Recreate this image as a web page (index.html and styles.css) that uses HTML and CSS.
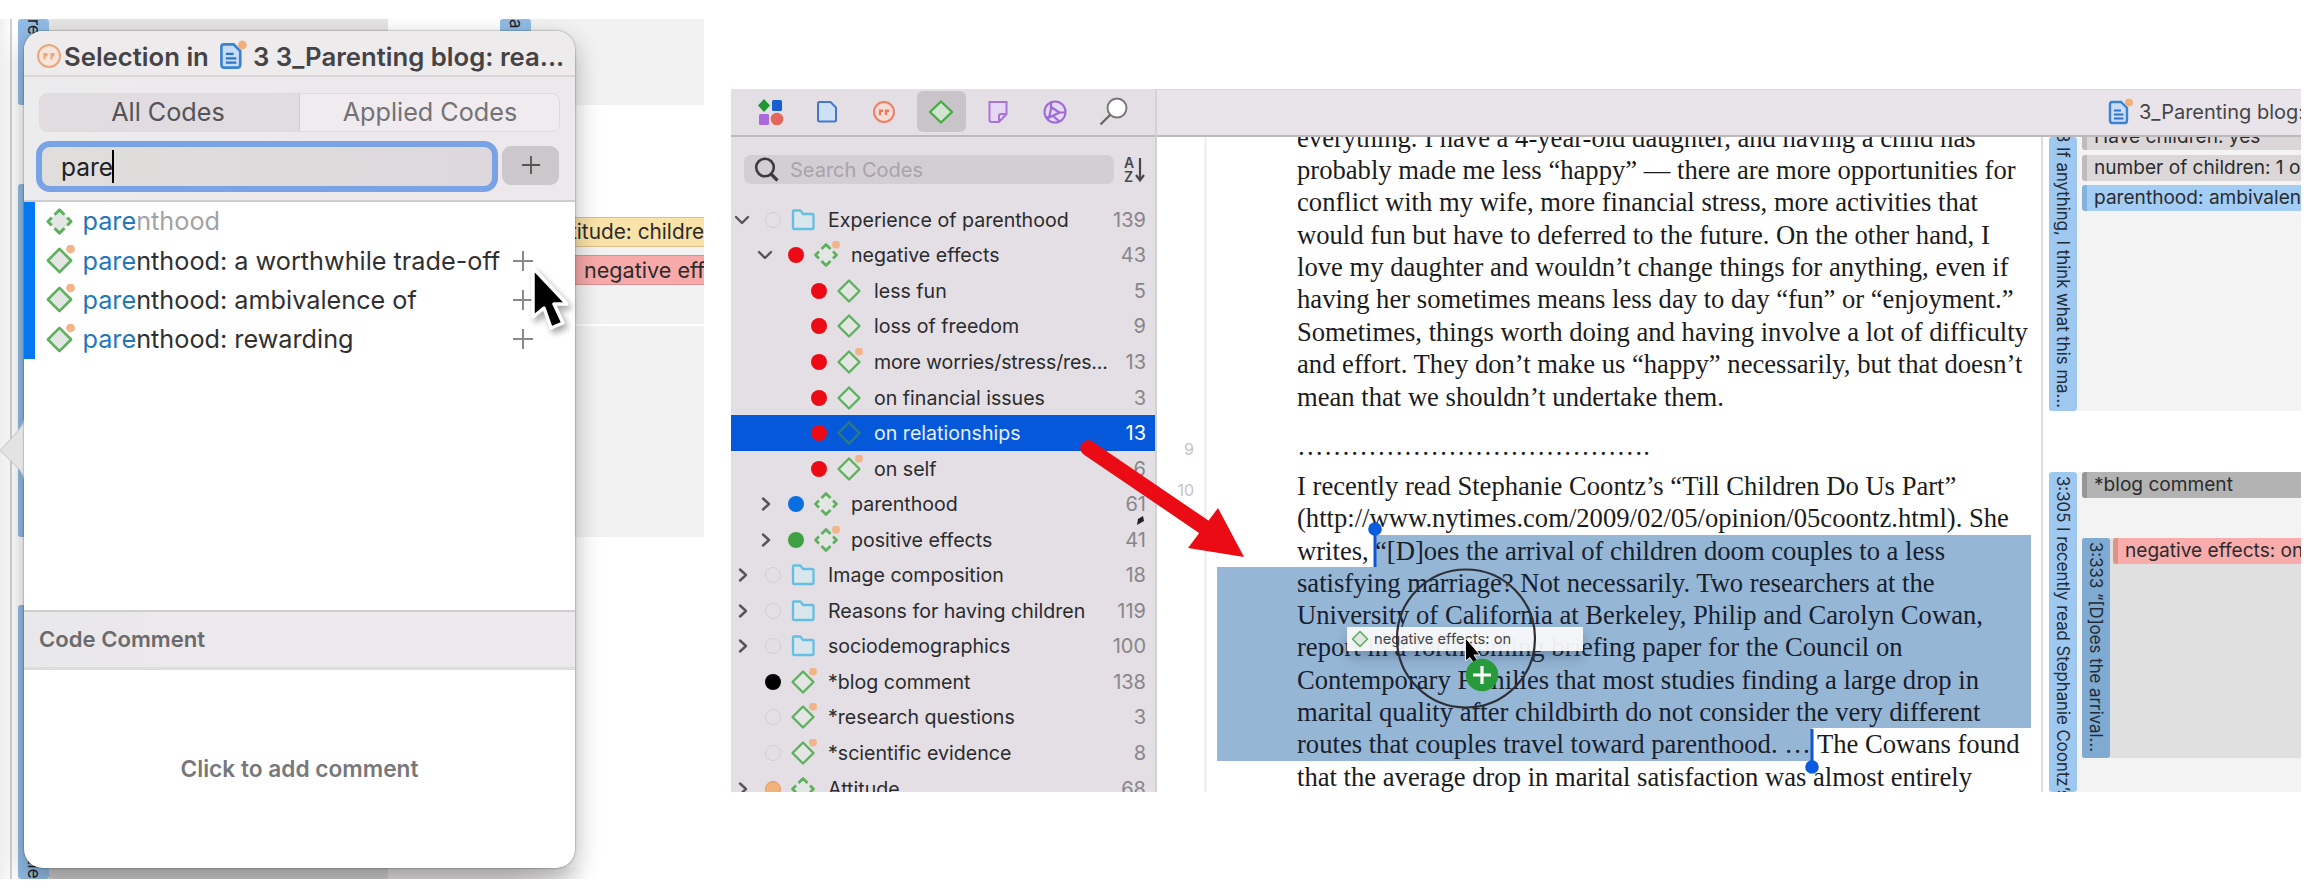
FILE: index.html
```html
<!DOCTYPE html>
<html lang="en">
<head>
<meta charset="utf-8">
<title>Codes</title>
<link rel="stylesheet" href="styles.css">
</head>
<body>
<svg class="defs" width="0" height="0" aria-hidden="true">
  <symbol id="code" viewBox="0 0 28 28"><path d="M14 3.5 24.5 14 14 24.5 3.5 14Z" fill="#e4e6e3" stroke="#5cb05e" stroke-width="2.3" stroke-linejoin="round"/></symbol>
  <symbol id="codeDot" viewBox="0 0 28 28"><path d="M14 3.5 24.5 14 14 24.5 3.5 14Z" fill="#e4e6e3" stroke="#5cb05e" stroke-width="2.3" stroke-linejoin="round"/><circle cx="24" cy="3.6" r="4" fill="#f2b589"/></symbol>
  <symbol id="cat" viewBox="0 0 28 28"><path d="M14 3.500 24.500 14 14 24.500 3.500 14Z" fill="#e4e6e3"/><path d="M9.500 8 14 3.500 18.500 8M21 10.500 24.500 14 21 17.500M18.500 20 14 24.500 9.500 20M7 17.500 3.500 14 7 10.500" fill="none" stroke="#5cb05e" stroke-width="2.600" stroke-linejoin="round"/></symbol>
  <symbol id="catDot" viewBox="0 0 28 28"><path d="M14 3.500 24.500 14 14 24.500 3.500 14Z" fill="#e4e6e3"/><path d="M9.500 8 14 3.500 18.500 8M21 10.500 24.500 14 21 17.500M18.500 20 14 24.500 9.500 20M7 17.500 3.500 14 7 10.500" fill="none" stroke="#5cb05e" stroke-width="2.600" stroke-linejoin="round"/><circle cx="24" cy="3.600" r="4" fill="#f2b589"/></symbol>
  <symbol id="folder" viewBox="0 0 28 28"><path d="M4 5.500Q4 4.500 5 4.500H10.500Q11.500 4.500 12 5.300L14 8H23Q24.500 8 24.500 9.500V21.500Q24.500 23 23 23H5.500Q4 23 4 21.500Z" fill="#d9e6ee" stroke="#64bfe3" stroke-width="2.300"/></symbol>
  <symbol id="down" viewBox="0 0 16 16"><path d="M2 5 8 11 14 5" fill="none" stroke="#555" stroke-width="2.400" stroke-linecap="round" stroke-linejoin="round"/></symbol>
  <symbol id="right" viewBox="0 0 16 16"><path d="M6 2.500 12 8 6 13.500" fill="none" stroke="#555" stroke-width="2.400" stroke-linecap="round" stroke-linejoin="round"/></symbol>
  <symbol id="doc" viewBox="0 0 26 28"><path d="M3 6Q3 4 5 4H14L20 10V22Q20 25 18 25H5Q3 25 3 22Z" fill="#c9dcf7" stroke="#3b82d0" stroke-width="2.400"/><path d="M7 12.500H14M7 16.500H16.500M7 20.500H16.500" stroke="#2f74c8" stroke-width="2"/><circle cx="22" cy="4.500" r="4" fill="#f2b07c"/></symbol>
  <symbol id="plus" viewBox="0 0 22 22"><path d="M11 1V21M1 11H21" stroke="currentColor" stroke-width="2" fill="none"/></symbol>
</svg>

<main class="page">
  <section class="shot quotes">
    <div class="canvas">
      <div class="block b-top"></div><div class="block b-topright"></div><div class="block b-mid"></div><div class="block b-low"></div><div class="block b-bottom"></div><div class="block b-bottom2"></div>
      <div class="rule"></div>
      <div class="bar bar1"><span>re</span></div><div class="bar bar2"></div><div class="bar bar3"><span>tie</span></div>
      <div class="bar bar4"><span>a</span></div>
      <div class="tag tag-yellow">titude: childre</div>
      <div class="tag tag-red">negative eff</div>
    </div>
    <svg class="notch" width="25" height="70" viewBox="0 0 25 70"><path d="M25 0Q24 8 18 15L0 34.500 18 52Q24 58 25 68Z" fill="#e3e2e4"/><path d="M25 0Q24 8 18 15L0 34.500 18 52Q24 58 25 68" fill="none" stroke="#c4c4c4"/></svg>
    <div class="popover">
      <header class="pop-title">
        <svg width="26" height="26" viewBox="0 0 26 26"><circle cx="13" cy="13" r="11" fill="#f7e4da" stroke="#eba67c" stroke-width="2"/><path d="M8.500 10V16.500M10.500 10V13.500M15.500 10V16.500M17.500 10V13.500" stroke="#eba67c" stroke-width="2"/></svg>
        <span class="t1">Selection in</span>
        <svg class="pop-doc" width="29" height="31"><use href="#doc"/></svg>
        <span class="t2">3 3_Parenting blog: rea...</span>
      </header>
      <div class="pop-tools">
        <div class="segments"><div class="seg on"><span>All Codes</span></div><div class="seg"><span>Applied Codes</span></div></div>
        <div class="entry"><div class="field"><span>pare</span><i class="caret"></i></div><div class="add"><svg width="20" height="20"><use href="#plus"/></svg></div></div>
      </div>
      <div class="hits">
        <div class="hit dim"><svg width="31" height="31"><use href="#cat"/></svg><span><b>pare</b>nthood</span></div>
        <div class="hit"><svg width="31" height="31"><use href="#codeDot"/></svg><span><b>pare</b>nthood: a worthwhile trade-off</span><svg class="hp" width="22" height="22"><use href="#plus"/></svg></div>
        <div class="hit"><svg width="31" height="31"><use href="#codeDot"/></svg><span><b>pare</b>nthood: ambivalence of</span><svg class="hp" width="22" height="22"><use href="#plus"/></svg></div>
        <div class="hit"><svg width="31" height="31"><use href="#codeDot"/></svg><span><b>pare</b>nthood: rewarding</span><svg class="hp" width="22" height="22"><use href="#plus"/></svg></div>
      </div>
      <div class="comment-head"><span>Code Comment</span></div>
      <div class="comment"><span>Click to add comment</span></div>
    </div>
    <svg class="pointer" width="50" height="74" viewBox="0 0 50 74"><path d="M4 2V51L15 42 22 62 34 57 25 38H38Z" fill="#000" stroke="#fff" stroke-width="3.500" stroke-linejoin="round"/></svg>
  </section>

  <section class="shot app">
    <aside class="side">
      <nav class="tabs">
        <div class="tab"><svg width="30" height="30" viewBox="0 0 30 30"><path d="M9 2 15 8.500 9 15 3 8.500Z" fill="#1d9a35"/><rect x="17" y="3" width="10" height="11" rx="1.500" fill="#1660cf"/><rect x="4" y="17" width="10" height="11" rx="1.500" fill="#ad68dd"/><circle cx="22" cy="22" r="6.300" fill="#e4685a"/></svg></div>
        <div class="tab"><svg width="30" height="30" viewBox="0 0 30 30"><path d="M7.500 5H18.500L24 10.500V23Q24 24.500 22.500 24.500H7.500Q6 24.500 6 23V6.500Q6 5 7.500 5Z" fill="#cfe0f5" stroke="#4578cc" stroke-width="2"/></svg></div>
        <div class="tab"><svg width="30" height="30" viewBox="0 0 30 30"><circle cx="15" cy="15" r="10" fill="#f5dcd6" stroke="#ee8165" stroke-width="2"/><path d="M11 12.500V18M13 12.500V15M17 12.500V18M19 12.500V15" stroke="#ee7a5c" stroke-width="2.200"/></svg></div>
        <div class="tab active"><svg width="30" height="30" viewBox="0 0 30 30"><path d="M15 4.500 26 15 15 25.500 4 15Z" fill="#d4e2d2" stroke="#43ad3f" stroke-width="2.300" stroke-linejoin="round"/></svg></div>
        <div class="tab"><svg width="30" height="30" viewBox="0 0 30 30"><path d="M6.500 5H23.500V17L16 25H8.500Q6.500 25 6.500 23ZM16 25V19Q16 17 18 17H23.500" fill="#e6d8f2" stroke="#a873db" stroke-width="2"/></svg></div>
        <div class="tab"><svg width="30" height="30" viewBox="0 0 30 30"><circle cx="15" cy="15" r="10.500" fill="#e6d8f2" stroke="#9b6bd8" stroke-width="2"/><path d="M11 5.500V12L9 20.500 19.500 15.500 11 10M19.500 15.500H25M9 20.500 6 20M13 19 19 24" fill="none" stroke="#9b6bd8" stroke-width="2.200"/></svg></div>
        <div class="tab"><svg width="30" height="30" viewBox="0 0 30 30"><circle cx="19" cy="11" r="9.500" fill="#fff" stroke="#777" stroke-width="1.900"/><path d="M12 18 2.500 27.500" stroke="#666" stroke-width="2.300"/></svg></div>
      </nav>
      <div class="search">
        <div class="search-box"><svg width="26" height="26" viewBox="0 0 26 26"><circle cx="11" cy="10.500" r="8.800" fill="none" stroke="#3c3c3e" stroke-width="2.600"/><path d="M17 17 23.500 23.500" stroke="#3c3c3e" stroke-width="3.200"/></svg><span>Search Codes</span></div>
        <div class="sort"><span class="az"><i>A</i><i>Z</i></span><svg width="10" height="26" viewBox="0 0 10 26"><path d="M5 1V22M1 18 5 23.500 9 18" stroke="#48484a" stroke-width="2.200" fill="none"/></svg></div>
      </div>
      <div class="tree">
        <div class="row l0"><svg class="ch"><use href="#down"/></svg><i class="dot"></i><svg class="ic"><use href="#folder"/></svg><span class="nm">Experience of parenthood</span><span class="ct">139</span></div>
        <div class="row l1"><svg class="ch"><use href="#down"/></svg><i class="dot red"></i><svg class="ic"><use href="#catDot"/></svg><span class="nm">negative effects</span><span class="ct">43</span></div>
        <div class="row l2"><svg class="ch"></svg><i class="dot red"></i><svg class="ic"><use href="#code"/></svg><span class="nm">less fun</span><span class="ct">5</span></div>
        <div class="row l2"><svg class="ch"></svg><i class="dot red"></i><svg class="ic"><use href="#code"/></svg><span class="nm">loss of freedom</span><span class="ct">9</span></div>
        <div class="row l2"><svg class="ch"></svg><i class="dot red"></i><svg class="ic"><use href="#codeDot"/></svg><span class="nm snug">more worries/stress/res...</span><span class="ct">13</span></div>
        <div class="row l2"><svg class="ch"></svg><i class="dot red"></i><svg class="ic"><use href="#code"/></svg><span class="nm">on financial issues</span><span class="ct">3</span></div>
        <div class="row l2 sel"><svg class="ch"></svg><i class="dot red"></i><svg class="ic" viewBox="0 0 28 28"><path d="M14 3.500 24.500 14 14 24.500 3.500 14Z" fill="none" stroke="#2b7a80" stroke-width="2.300"/></svg><span class="nm">on relationships</span><span class="ct">13</span></div>
        <div class="row l2"><svg class="ch"></svg><i class="dot red"></i><svg class="ic"><use href="#codeDot"/></svg><span class="nm">on self</span><span class="ct">6</span></div>
        <div class="row l1"><svg class="ch"><use href="#right"/></svg><i class="dot blue"></i><svg class="ic"><use href="#cat"/></svg><span class="nm">parenthood</span><span class="ct">61</span></div>
        <div class="row l1"><svg class="ch"><use href="#right"/></svg><i class="dot green"></i><svg class="ic"><use href="#catDot"/></svg><span class="nm">positive effects</span><span class="ct">41</span></div>
        <div class="row l0"><svg class="ch"><use href="#right"/></svg><i class="dot"></i><svg class="ic"><use href="#folder"/></svg><span class="nm">Image composition</span><span class="ct">18</span></div>
        <div class="row l0"><svg class="ch"><use href="#right"/></svg><i class="dot"></i><svg class="ic"><use href="#folder"/></svg><span class="nm">Reasons for having children</span><span class="ct">119</span></div>
        <div class="row l0"><svg class="ch"><use href="#right"/></svg><i class="dot"></i><svg class="ic"><use href="#folder"/></svg><span class="nm">sociodemographics</span><span class="ct">100</span></div>
        <div class="row l0"><svg class="ch"></svg><i class="dot black"></i><svg class="ic"><use href="#codeDot"/></svg><span class="nm">*blog comment</span><span class="ct">138</span></div>
        <div class="row l0"><svg class="ch"></svg><i class="dot"></i><svg class="ic"><use href="#codeDot"/></svg><span class="nm">*research questions</span><span class="ct">3</span></div>
        <div class="row l0"><svg class="ch"></svg><i class="dot"></i><svg class="ic"><use href="#codeDot"/></svg><span class="nm">*scientific evidence</span><span class="ct">8</span></div>
        <div class="row l0"><svg class="ch"><use href="#right"/></svg><i class="dot orange"></i><svg class="ic"><use href="#cat"/></svg><span class="nm">Attitude</span><span class="ct">68</span></div>
      </div>
    </aside>
    <div class="main">
      <header class="bar-top"><svg width="26" height="28"><use href="#doc"/></svg><span>3_Parenting blog:</span></header>
      <div class="work">
        <div class="gutter"><span class="n9">9</span><span class="n10">10</span></div>
        <article class="text">
          <div class="para p1">
            <p>everything. I have a 4-year-old daughter, and having a child has</p>
            <p>probably made me less “happy” — there are more opportunities for</p>
            <p>conflict with my wife, more financial stress, more activities that</p>
            <p>would fun but have to deferred to the future. On the other hand, I</p>
            <p>love my daughter and wouldn’t change things for anything, even if</p>
            <p>having her sometimes means less day to day “fun” or “enjoyment.”</p>
            <p>Sometimes, things worth doing and having involve a lot of difficulty</p>
            <p>and effort. They don’t make us “happy” necessarily, but that doesn’t</p>
            <p>mean that we shouldn’t undertake them.</p>
          </div>
          <div class="para p2"><p>………………………………….</p></div>
          <div class="para p3">
            <p>I recently read Stephanie Coontz’s “Till Children Do Us Part”</p>
            <p>(http://www.nytimes.com/2009/02/05/opinion/05coontz.html). She</p>
            <p class="first"><span>writes,&nbsp;</span><mark>“[D]oes the arrival of children doom couples to a less</mark></p>
            <p class="hl">satisfying marriage? Not necessarily. Two researchers at the</p>
            <p class="hl">University of California at Berkeley, Philip and Carolyn Cowan,</p>
            <p class="hl">report in a forthcoming briefing paper for the Council on</p>
            <p class="hl">Contemporary Families that most studies finding a large drop in</p>
            <p class="hl">marital quality after childbirth do not consider the very different</p>
            <p class="last"><mark>routes that couples travel toward parenthood. …</mark><span>The Cowans found</span></p>
            <p>that the average drop in marital satisfaction was almost entirely</p>
          </div>
        </article>
        <div class="margin">
          <div class="group g1">
            <div class="vbar"><span>3 If anything, I think what this ma...</span></div>
            <div class="tags"><div class="mt grey cut">Have children: yes</div><div class="mt grey">number of children: 1 or</div><div class="mt blue">parenthood: ambivalence</div></div>
          </div>
          <div class="group g2">
            <div class="vbar"><span>3:305 I recently read Stephanie Coontz’s</span></div>
            <div class="tags"><div class="mt dark">*blog comment</div>
              <div class="inner"><div class="vbar deep"><span>3:333 “[D]oes the arrival...</span></div><div class="mt pink">negative effects: on</div></div>
            </div>
          </div>
        </div>
      </div>
    </div>
  </section>

  <svg class="overlay" width="2310" height="893" viewBox="0 0 2310 893">
    <path d="M1375 529V567M1812 729V766" stroke="#0f55d6" stroke-width="3"/>
    <circle cx="1375" cy="529" r="6.800" fill="#0b5be0"/><circle cx="1812" cy="767" r="6.800" fill="#0b5be0"/>
    <path d="M1137 525 1138 519 1143 516 1144 521Z" fill="#222"/>
    <path d="M1088 448 1210 531" stroke="#ea0b14" stroke-width="15.500" stroke-linecap="round"/><path d="M1218 508 1244 557 1188 548Z" fill="#ea0b14"/>
  </svg>
  <div class="chip"><svg width="20" height="20"><use href="#code"/></svg><span>negative effects: on</span></div>
  <svg class="overlay" width="2310" height="893" viewBox="0 0 2310 893">
    <circle cx="1466" cy="638.500" r="69" fill="none" stroke="#2c2f36" stroke-width="2.200"/>
    <path d="M1465.500 638V661L1470 657.500 1474 664 1478 661 1474 655H1480Z" fill="#000" stroke="#e8eef5" stroke-width="1"/>
    <circle cx="1482" cy="675" r="16.300" fill="#279a3b"/><path d="M1482 666V684M1473 675H1491" stroke="#fff" stroke-width="3.200"/>
  </svg>
</main>
</body>
</html>
```
FILE: styles.css
```css
* { box-sizing: border-box; }
body { margin: 0; background: #fff; font-family: Inter, "Liberation Sans", sans-serif; color: #2b2b2d; }
.defs { position: absolute; }
.page { position: relative; width: 2310px; height: 893px; display: flex; align-items: flex-start; gap: 27px; overflow: hidden; }
.page span, .tag, .mt { white-space: nowrap; }
.shot { position: relative; overflow: hidden; flex: none; }

/* left capture */
.quotes { width: 704px; height: 860px; margin-top: 19px; }
.canvas { position: absolute; inset: 0; background: linear-gradient(90deg, #f0f0f0, #fff 12px); }
.block { position: absolute; background: #f2f2f2; }
.b-top { left: 49px; top: 0; width: 339px; height: 86px; background: #e7e5e6; }
.b-topright { left: 530px; top: 0; right: 0; height: 86px; }
.b-mid { left: 530px; top: 198px; right: 0; height: 107px; }
.b-low { left: 530px; top: 307px; right: 0; height: 211px; }
.b-bottom { left: 49px; bottom: 0; width: 339px; height: 12px; background: #cbcacb; }
.b-bottom2 { left: 388px; bottom: 0; width: 200px; height: 12px; background: linear-gradient(90deg, #e0dcdd 60%, #fff); }
.rule { position: absolute; left: 10px; top: 0; width: 2px; height: 100%; background: #cfcfcf; }
.bar { position: absolute; left: 18px; width: 31px; background: #91bce5; overflow: hidden; font-size: 17px; color: #222; writing-mode: vertical-rl; line-height: 31px; border-radius: 3px; }
.bar1 { top: 0; height: 86px; }
.bar2 { top: 165px; height: 353px; }
.bar3 { top: 586px; height: 274px; text-align: right; }
.bar4 { left: 500px; top: 0; height: 50px; }
.tag { position: absolute; right: 0; overflow: hidden; height: 30px; line-height: 28px; font-size: 20px; border: 1px solid #dcc08d; border-width: 1px 0; }
.tag-yellow { left: 570px; top: 198px; background: #fae3a9; font-size: 20.800px; }
.tag-red { left: 560px; padding-left: 24px; top: 236px; background: #f7aaa9; border-color: #d99090; font-size: 21.600px; }
.notch { position: absolute; left: 0; top: 397px; }
.popover { position: absolute; left: 24px; top: 12px; width: 551px; height: 837px; border-radius: 19px; background: #fff; overflow: hidden; display: flex; flex-direction: column; box-shadow: 0 0 2px rgba(0,0,0,.55); }
.canvas::after { content: ""; position: absolute; left: 24px; top: 12px; width: 551px; height: 837px; border-radius: 19px; box-shadow: 0 10px 26px rgba(0,0,0,.3); }
.pop-title { height: 46px; flex: none; background: #eeebed; border-bottom: 2px solid #d9d5d8; display: flex; align-items: center; padding: 6px 0 0 12px; font-weight: 600; font-size: 25.700px; color: #454346; }
.pop-title svg { flex: none; }
.t1 { margin-left: 2px; width: 145px; }
.pop-doc { margin: -2px 6px 0 9px; }
.pop-tools { height: 125px; flex: none; background: linear-gradient(90deg, #ececed, #ede8ec 50%); border-bottom: 2px solid #cfccce; padding: 16px 15px 0; }
.segments { height: 39px; display: flex; border: 1px solid #dedadd; border-radius: 8px; background: #efebef; overflow: hidden; font-size: 25.200px; }
.seg { flex: 1; display: flex; align-items: center; justify-content: center; padding: 0 0 2px 1px; color: #747275; }
.seg.on { background: #e0dce0; color: #555356; flex: 0 0 260px; padding: 0 3px 2px 0; border-right: 1px solid #d0ccd0; }
.entry { margin: 9px 0 0 -3px; display: flex; align-items: center; gap: 4px; }
.field { width: 462px; height: 51px; border: 6px solid #7aa2e6; border-radius: 14px; background: linear-gradient(90deg, #e0dedc, #dcd8dd); padding-left: 19px; display: flex; align-items: center; font-size: 24.500px; color: #222; }
.caret { width: 2px; height: 33px; margin-left: -1px; background: #000; }
.add { width: 57px; height: 39px; margin: 0 0 2px; border-radius: 9px; background: #cbc7cb; display: flex; align-items: center; justify-content: center; padding-bottom: 2px; color: #555; }
.hits { height: 408px; flex: none; position: relative; }
.hits::before { content: ""; position: absolute; left: 0; top: 0; width: 11px; height: 157px; background: #0478f3; }
.hit { position: relative; height: 39.400px; display: flex; align-items: center; padding: 0 0 1px 19.500px; font-size: 25.240px; color: #303032; }
.hit > span { margin-left: 8px; }
.hit b { font-weight: 400; color: #1f78bb; }
.hit.dim { color: #a2a2a4; }
.hp { margin: 0 41px 0 auto; color: #88888a; }
.comment-head { height: 60px; flex: none; background: linear-gradient(90deg, #e8e8ea, #ede8ec 30%); border-top: 2px solid #d2cdd0; border-bottom: 3px solid #dddcde; display: flex; align-items: center; padding: 0 0 1px 15px; font-size: 22.100px; font-weight: 600; color: #6b6a6c; }
.comment { flex: 1; display: flex; align-items: center; justify-content: center; padding-bottom: 1px; font-size: 22.700px; font-weight: 600; color: #78787a; }
.pointer { position: absolute; left: 529px; top: 247px; filter: drop-shadow(3px 4px 3px rgba(0,0,0,.35)); }

/* right capture */
.app { width: 1570px; height: 703px; margin-top: 89px; display: flex; }
.side { width: 426px; background: #e3dfe4; flex: none; border-right: 2px solid #d4d0d4; }
.tabs { height: 48px; display: flex; padding: 2px 0 0 14px; border-bottom: 2px solid #bcb8bc; gap: 8.200px; align-items: flex-start; }
.tab { width: 49px; height: 41px; border-radius: 6px; display: flex; align-items: center; justify-content: center; }
.tab.active { background: #c8c4c9; }
.search { display: flex; align-items: center; padding: 17px 0 0 13px; height: 48px; gap: 10px; }
.search-box { width: 370px; height: 29px; border-radius: 7px; background: #d2ced3; display: flex; align-items: center; gap: 10px; padding-left: 10px; font-size: 20px; color: #a8a4a9; }
.sort { display: flex; align-items: center; gap: 1px; color: #48484a; }
.az { display: flex; flex-direction: column; font-size: 14px; line-height: 14px; font-weight: 600; }
.az i { font-style: normal; }
.tree { padding-top: 17px; }
.row { height: 35.560px; display: flex; align-items: center; padding-right: 9px; font-size: 19.600px; }
.row.l0 { padding-left: 3px; }
.row.l1 { padding-left: 26px; }
.row.l2 { padding-left: 49px; }
.ch { width: 16px; height: 16px; flex: none; }
.dot { width: 16px; height: 16px; border-radius: 50%; margin-left: 15px; border: 1px solid #d2ced2; flex: none; }
.red { background: #ec0a14; border: 0; }
.blue.dot { background: #0a6fe0; border: 0; }
.green { background: #3fa044; border: 0; }
.black { background: #000; border: 0; }
.orange { background: #f3b277; border-color: #dd9a62; }
.ic { width: 28px; height: 28px; margin-left: 8px; flex: none; }
.nm { margin-left: 11px; }
.nm.snug { letter-spacing: -.16px; }
.ct { margin-left: auto; color: #88858a; font-size: 20px; }
.sel { background: #0558d9; color: #e6effc; }
.sel .ct { color: #fff; }
.main { flex: 1; min-width: 0; display: flex; flex-direction: column; }
.bar-top { height: 48px; flex: none; background: #e8e4e9; border-top: 1px solid #ddd9de; border-bottom: 2px solid #bcb8bc; padding: 0 0 1px 950px; display: flex; align-items: center; gap: 6px; font-size: 20px; color: #454446; }
.bar-top svg { flex: none; }
.work { flex: 1; display: flex; min-height: 0; overflow: hidden; }
.gutter { width: 50px; flex: none; border-right: 3px solid #f1f1f1; padding: 302px 10px 0 0; display: flex; flex-direction: column; align-items: flex-end; gap: 21px; font-size: 16px; line-height: 20px; color: #c4c4c4; }
.text { width: 836px; flex: none; padding-left: 10px; border-right: 2px solid #dedcdc; font-family: "Liberation Serif", serif; font-size: 26.640px; color: #1b1b1c; }
.para p { margin: 0; width: 814px; height: 32.400px; line-height: 32.400px; padding-left: 80px; white-space: nowrap; }
.p1 { margin-top: -15.500px; }
.p2 { margin-top: 17px; }
.p3 { margin-top: 7.500px; }
.p3 p { height: 32.300px; line-height: 32.300px; }
.hl { background: #96b6d6; color: #17202c; }
mark { background: #96b6d6; color: #17202c; }
.para p.first { display: flex; }
.first span { width: 78px; }
.first mark { flex: 1; }
.para p.last { display: flex; padding: 0; }
.last mark { padding-left: 80px; width: 595px; flex: none; }
.last span { margin-left: 5px; }
.margin { flex: 1; min-width: 0; padding-left: 6px; }
.group { display: flex; overflow: hidden; }
.g1 { height: 274px; }
.g2 { height: 320px; margin-top: 61px; }
.vbar { width: 28px; flex: none; background: #9ec8ef; border-radius: 3px; writing-mode: vertical-rl; line-height: 28px; font-size: 16.800px; overflow: hidden; color: #222b36; }
.g1 .vbar span { display: block; margin-top: -5px; }
.g2 .vbar { padding-top: 4px; }
.tags { flex: 1; min-width: 0; background: #f3f3f3; padding-left: 5px; overflow: hidden; }
.mt { height: 26px; line-height: 25px; padding-left: 7px; border-left: 5px solid #c0bbbb; font-size: 19.100px; overflow: hidden; margin-bottom: 4px; border-radius: 3px 0 0 3px; background: #dbd7d9; }
.mt.cut { height: 26px; margin-top: -13px; }
.mt.grey + .mt.grey { margin-top: 5px; }
.mt.blue { background: #a3cdf4; border-color: #85b2da; }
.mt.dark { background: #b3b3b3; border-color: #989594; margin-bottom: 40px; }
.inner { display: flex; height: 220px; background: #e0e0e0; gap: 3px; }
.vbar.deep { background: #7faad2; }
.mt.pink { flex: 1; background: #f8acab; border-color: #dd9485; }

.overlay { position: absolute; left: 0; top: 0; }
.chip { position: absolute; left: 1347px; top: 627px; width: 236px; height: 24px; display: flex; align-items: center; gap: 4px; padding-left: 3px; background: rgba(248,249,251,.95); box-shadow: 0 7px 12px rgba(30,50,80,.28); font-size: 14.700px; color: #444; }
```
